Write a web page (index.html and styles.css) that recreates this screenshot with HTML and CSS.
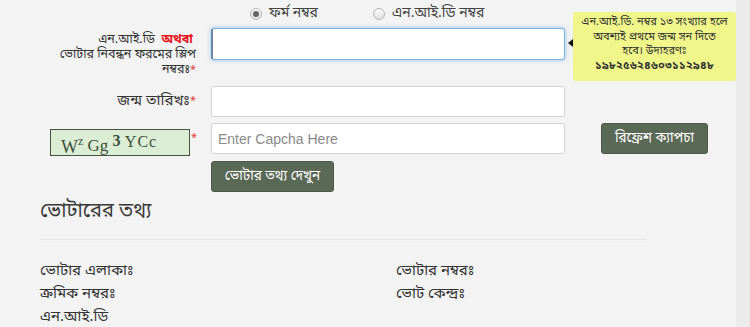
FILE: index.html
```html
<!DOCTYPE html>
<html lang="bn">
<head>
    <meta charset="UTF-8">
    <title>ভোটার তথ্য</title>
    <link rel="stylesheet" href="styles.css">
</head>
<body>
    <div class="page">
        <form class="search-form">
            <div class="radio-row">
                <label class="radio-opt first"><input type="radio" name="type" checked> ফর্ম নম্বর</label>
                <label class="radio-opt"><input type="radio" name="type"> এন.আই.ডি নম্বর</label>
            </div>

            <div class="form-row">
                <div class="form-label multi">
                    <div>এন.আই.ডি&nbsp; <span class="or">অথবা</span>&nbsp;</div>
                    <div>ভোটার নিবন্ধন ফরমের স্লিপ</div>
                    <div>নম্বরঃ<span class="req">*</span></div>
                </div>
                <div class="field">
                    <input type="text" class="text-input focused">
                    <div class="hint">এন.আই.ডি. নম্বর ১৩ সংখ্যার হলে<br>অবশ্যই প্রথমে জন্ম সন দিতে<br>হবে। উদাহরণঃ<br><b>১৯৮২৫৬২৪৬০৩১১২৯৪৮</b></div>
                </div>
            </div>

            <div class="form-row row-dob">
                <div class="form-label big">জন্ম তারিখঃ<span class="req">*</span></div>
                <div class="field">
                    <input type="text" class="text-input">
                </div>
            </div>

            <div class="form-row row-captcha">
                <div class="form-label captcha-cell">
                    <div class="captcha"><span class="c1">W</span><span class="c2">z</span> <span class="c3">Gg</span> <span class="c4">3</span> <span class="c5">YCc</span></div>
                    <span class="req">*</span>
                </div>
                <div class="field">
                    <input type="text" class="text-input" placeholder="Enter Capcha Here">
                </div>
                <button type="button" class="btn refresh-btn">রিফ্রেশ ক্যাপচা</button>
            </div>

            <div class="form-row row-submit">
                <div class="form-label"></div>
                <button type="button" class="btn">ভোটার তথ্য দেখুন</button>
            </div>
        </form>

        <div class="result">
            <h2 class="result-title">ভোটারের তথ্য</h2>
            <hr class="divider">
            <div class="info-grid">
                <div>ভোটার এলাকাঃ</div>
                <div>ভোটার নম্বরঃ</div>
                <div>ক্রমিক নম্বরঃ</div>
                <div>ভোট কেন্দ্রঃ</div>
                <div>এন.আই.ডি</div>
            </div>
        </div>
    </div>
    <div class="side-strip"></div>
</body>
</html>
```

FILE: styles.css
```css
body {
    margin: 0;
    display: flex;
    min-height: 327px;
    background: #f3f3f3;
    color: #333;
    font-family: "Noto Sans Bengali", "Noto Serif Bengali", "Lohit Bengali", "FreeSans", "Liberation Sans", sans-serif;
    font-size: 13px;
    overflow: hidden;
}
.page {
    flex: 1;
}
.side-strip {
    width: 14px;
    background: #ebebeb;
}

/* radio choice */
.radio-row {
    display: flex;
    padding: 5px 0 0 250px;
    height: 18px;
    line-height: 18px;
    font-size: 14px;
}
.radio-opt {
    display: flex;
    align-items: center;
    gap: 7px;
    color: #444;
}
.radio-opt.first {
    width: 123px;
}
.radio-opt input {
    appearance: none;
    margin: 0;
    width: 12px;
    height: 12px;
    border: 1px solid #b5b5b5;
    border-radius: 50%;
    background: linear-gradient(#fafafa, #e2e2e2);
    box-sizing: border-box;
    position: relative;
}
.radio-opt input:checked::after {
    content: "";
    position: absolute;
    left: 2px;
    top: 2px;
    width: 6px;
    height: 6px;
    border-radius: 50%;
    background: #666;
}

/* form rows */
.form-row {
    display: flex;
    align-items: flex-start;
    margin-top: 5px;
}
.row-dob {
    margin-top: 8px;
}
.row-captcha {
    margin-top: 6px;
}
.row-submit {
    margin-top: 5px;
}
.form-label {
    width: 196px;
    padding-right: 15px;
    text-align: right;
    flex-shrink: 0;
}
.form-label.multi {
    padding-top: 5px;
    line-height: 15px;
    font-size: 12.5px;
}
.form-label.big {
    font-size: 15px;
    line-height: 31px;
}
.or {
    color: #e8101a;
    font-weight: bold;
}
.req {
    color: #e53935;
    font-size: 11px;
    vertical-align: top;
}
.field {
    position: relative;
    width: 354px;
}
.text-input {
    display: block;
    box-sizing: border-box;
    width: 354px;
    height: 31px;
    padding: 4px 6px;
    border: 1px solid #d2d2d2;
    border-radius: 3px;
    background: #fff;
    font-family: "Liberation Sans", Arial, sans-serif;
    font-size: 14px;
    color: #555;
    outline: none;
}
.text-input.focused {
    height: 32px;
    border-color: #7fb3e6;
    box-shadow: 0 0 4px rgba(102, 175, 233, 0.7);
    border-left: 2px solid #6a87a8;
}
.text-input::placeholder {
    color: #8a8a8a;
}

/* tooltip next to first field */
.hint {
    position: absolute;
    left: 362px;
    top: -16px;
    width: 151px;
    height: 63px;
    padding: 3px 6px;
    background: #f0f68a;
    border-radius: 3px;
    font-size: 11px;
    line-height: 14.7px;
    text-align: center;
    color: #333;
    white-space: nowrap;
}
.hint b {
    font-weight: bold;
    letter-spacing: 0.3px;
}
.hint::before {
    content: "";
    position: absolute;
    left: -5px;
    top: 27px;
    border-top: 4px solid transparent;
    border-bottom: 4px solid transparent;
    border-right: 5px solid #111;
}

/* captcha */
.captcha-cell {
    display: flex;
    justify-content: flex-end;
    align-items: flex-start;
    gap: 1px;
    padding-top: 6px;
}
.captcha {
    box-sizing: border-box;
    width: 140px;
    height: 27px;
    padding: 0 0 0 10px;
    border: 1px solid #44543f;
    background: #dcedd5;
    text-align: left;
    font-family: "Liberation Serif", "Times New Roman", serif;
    color: #3d4d3b;
    font-size: 17px;
    line-height: 27px;
    white-space: nowrap;
}
.captcha span {
    display: inline-block;
}
.c1 {
    font-size: 18px;
    transform: translateY(4px);
}
.c2 {
    font-size: 12px;
    transform: translateY(-4px);
}
.c3 {
    font-size: 17px;
    transform: translateY(2px);
}
.c4 {
    font-size: 16px;
    font-weight: bold;
    transform: translateY(-3px);
}
.c5 {
    font-size: 16px;
    letter-spacing: 1px;
    transform: translateY(-2px);
}
.captcha-cell .req {
    width: 5px;
    margin-top: 2px;
}

/* buttons */
.btn {
    box-sizing: border-box;
    height: 31px;
    padding: 0 9px;
    border: 1px solid #4b5947;
    border-radius: 3px;
    background: #5a6955;
    color: #fff;
    font-family: inherit;
    font-size: 13.5px;
    cursor: pointer;
}
.refresh-btn {
    margin-left: 36px;
    width: 107px;
}
.row-submit .btn {
    width: 123px;
}

/* results */
.result {
    padding: 0 0 0 40px;
}
.result-title {
    margin: 6px 0 0;
    font-size: 20px;
    font-weight: normal;
    line-height: 28px;
    color: #3a3a3a;
}
.divider {
    width: 607px;
    margin: 13px 0 0;
    border: 0;
    border-top: 1px solid #e6e6e6;
    border-bottom: 1px solid #f8f8f8;
}
.info-grid {
    display: grid;
    grid-template-columns: 356px 1fr;
    margin-top: 19px;
    line-height: 23px;
    font-size: 15px;
}
```
